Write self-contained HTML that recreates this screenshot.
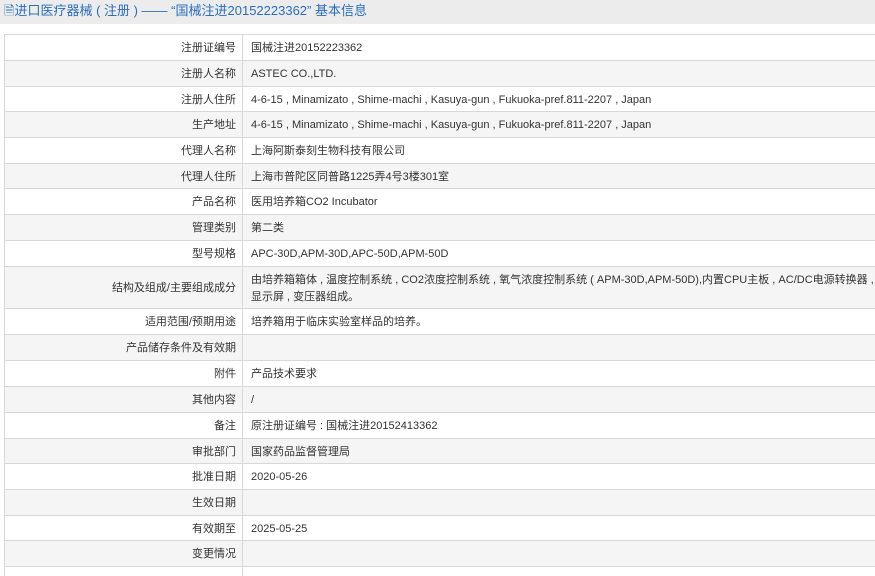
<!DOCTYPE html>
<html><head><meta charset="utf-8"><style>
body{margin:0;width:875px;height:568px;overflow:hidden;background:#fff;font-family:"Liberation Sans","Noto Sans CJK SC",sans-serif;font-size:11px;color:#333}
.hd{position:absolute;left:0;top:0;width:875px;height:24px;background:#ececec;color:#2a6ebb;font-size:13px;line-height:22px;padding-left:4px;box-sizing:border-box}
.r{position:absolute;left:4px;width:900px;border-top:1px solid #d8d8d8;box-sizing:border-box;display:flex}
.r.g{background:#f5f5f5}
.l{width:239px;border-left:1px solid #d8d8d8;border-right:1px solid #d8d8d8;text-align:right;padding-right:6px;padding-top:2px;box-sizing:border-box;display:flex;align-items:center;justify-content:flex-end;line-height:17px}
.v{padding-left:8px;padding-top:2px;display:flex;align-items:center;line-height:17px;width:640px;white-space:nowrap}
</style></head><body>
<div class="hd">🗎进口医疗器械 ( 注册 ) —— “国械注进20152223362” 基本信息</div>
<div class="r" style="top:34px;height:26px"><div class="l">注册证编号</div><div class="v">国械注进20152223362</div></div>
<div class="r g" style="top:60px;height:26px"><div class="l">注册人名称</div><div class="v">ASTEC CO.,LTD.</div></div>
<div class="r" style="top:86px;height:25px"><div class="l">注册人住所</div><div class="v">4-6-15 , Minamizato , Shime-machi , Kasuya-gun , Fukuoka-pref.811-2207 , Japan</div></div>
<div class="r g" style="top:111px;height:26px"><div class="l">生产地址</div><div class="v">4-6-15 , Minamizato , Shime-machi , Kasuya-gun , Fukuoka-pref.811-2207 , Japan</div></div>
<div class="r" style="top:137px;height:26px"><div class="l">代理人名称</div><div class="v">上海阿斯泰刻生物科技有限公司</div></div>
<div class="r g" style="top:163px;height:25px"><div class="l">代理人住所</div><div class="v">上海市普陀区同普路1225弄4号3楼301室</div></div>
<div class="r" style="top:188px;height:26px"><div class="l">产品名称</div><div class="v">医用培养箱CO2 Incubator</div></div>
<div class="r g" style="top:214px;height:26px"><div class="l">管理类别</div><div class="v">第二类</div></div>
<div class="r" style="top:240px;height:26px"><div class="l">型号规格</div><div class="v">APC-30D,APM-30D,APC-50D,APM-50D</div></div>
<div class="r g" style="top:266px;height:42px"><div class="l">结构及组成/主要组成成分</div><div class="v"><div>由培养箱箱体 , 温度控制系统 , CO2浓度控制系统 , 氧气浓度控制系统 ( APM-30D,APM-50D),内置CPU主板 , AC/DC电源转换器 ,<br>显示屏 , 变压器组成。</div></div></div>
<div class="r" style="top:308px;height:26px"><div class="l">适用范围/预期用途</div><div class="v">培养箱用于临床实验室样品的培养。</div></div>
<div class="r g" style="top:334px;height:26px"><div class="l">产品储存条件及有效期</div><div class="v"></div></div>
<div class="r" style="top:360px;height:26px"><div class="l">附件</div><div class="v">产品技术要求</div></div>
<div class="r g" style="top:386px;height:26px"><div class="l">其他内容</div><div class="v">/</div></div>
<div class="r" style="top:412px;height:26px"><div class="l">备注</div><div class="v">原注册证编号 : 国械注进20152413362</div></div>
<div class="r g" style="top:438px;height:25px"><div class="l">审批部门</div><div class="v">国家药品监督管理局</div></div>
<div class="r" style="top:463px;height:26px"><div class="l">批准日期</div><div class="v">2020-05-26</div></div>
<div class="r g" style="top:489px;height:26px"><div class="l">生效日期</div><div class="v"></div></div>
<div class="r" style="top:515px;height:25px"><div class="l">有效期至</div><div class="v">2025-05-25</div></div>
<div class="r g" style="top:540px;height:26px"><div class="l">变更情况</div><div class="v"></div></div>
<div class="r" style="top:566px;height:10px"><div class="l"></div></div>
</body></html>
